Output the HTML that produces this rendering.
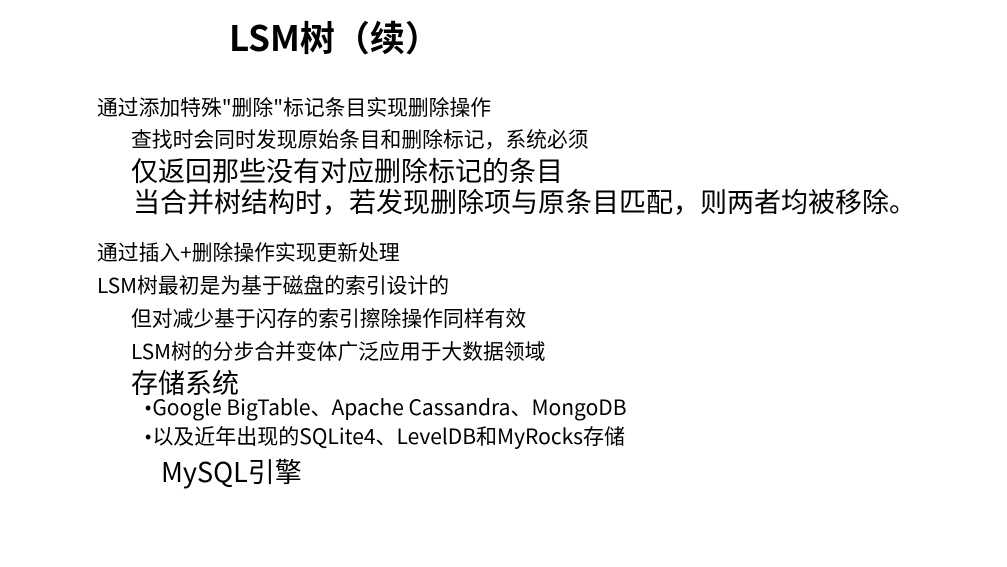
<!DOCTYPE html>
<html><head><meta charset="utf-8"><style>
html,body{margin:0;padding:0;background:#fff;}
body{width:1007px;height:567px;position:relative;overflow:hidden;font-family:"Noto Sans CJK SC","Liberation Sans",sans-serif;color:#000;}
div{position:absolute;white-space:nowrap;line-height:1;}
.s{font-size:20.8px;}
.b{font-size:27px;}
.d{font-family:"Liberation Sans",sans-serif;font-size:18px;vertical-align:1px;margin-right:1px;}
</style></head><body>
<div style="left:229px;top:19px;font-size:35px;font-weight:bold;">LSM树（续）</div>
<div class="s" style="left:97px;top:96px;">通过添加特殊"删除"标记条目实现删除操作</div>
<div class="s" style="left:131px;top:128px;">查找时会同时发现原始条目和删除标记，系统必须</div>
<div class="b" style="left:131px;top:156px;">仅返回那些没有对应删除标记的条目</div>
<div class="b" style="left:133px;top:187px;">当合并树结构时，若发现删除项与原条目匹配，则两者均被移除。</div>
<div class="s" style="left:97px;top:241px;">通过插入+删除操作实现更新处理</div>
<div class="s" style="left:97px;top:274px;">LSM树最初是为基于磁盘的索引设计的</div>
<div class="s" style="left:131px;top:307px;">但对减少基于闪存的索引擦除操作同样有效</div>
<div class="s" style="left:131px;top:340px;">LSM树的分步合并变体广泛应用于大数据领域</div>
<div class="b" style="left:131px;top:368px;">存储系统</div>
<div class="s" style="left:145px;top:397px;font-size:21px;"><span class="d">•</span>Google BigTable、Apache Cassandra、MongoDB</div>
<div class="s" style="left:145px;top:426px;font-size:21px;"><span class="d">•</span>以及近年出现的SQLite4、LevelDB和MyRocks存储</div>
<div class="b" style="left:161px;top:457px;">MySQL引擎</div>
</body></html>
